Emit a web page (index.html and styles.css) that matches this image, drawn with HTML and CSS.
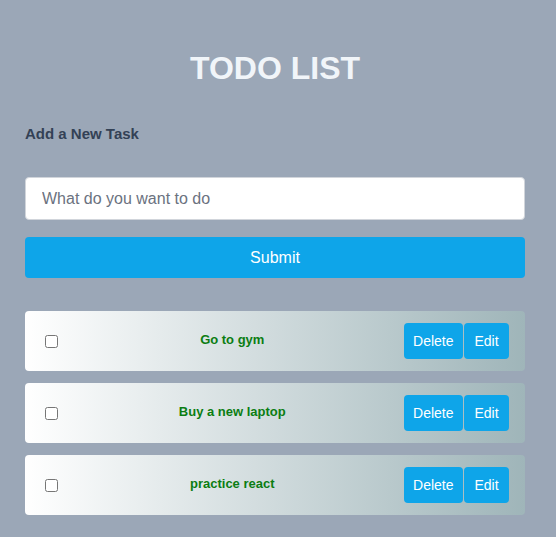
FILE: index.html
```html
<!DOCTYPE html>
<html lang="en">
<head>
<meta charset="utf-8">
<title>Todo List</title>
<link rel="stylesheet" href="styles.css">
</head>
<body>
<main class="app">
  <h1 class="title">TODO LIST</h1>
  <form class="add-form">
    <label class="add-label" for="task">Add a New Task</label>
    <input class="task-input" id="task" type="text" placeholder="What do you want to do">
    <button class="submit-btn" type="button">Submit</button>
  </form>
  <ul class="task-list">
    <li class="task">
      <input class="task-check" type="checkbox">
      <span class="task-text">Go to gym</span>
      <div class="task-actions">
        <button class="act-btn" type="button">Delete</button>
        <button class="act-btn act-edit" type="button">Edit</button>
      </div>
    </li>
    <li class="task">
      <input class="task-check" type="checkbox">
      <span class="task-text">Buy a new laptop</span>
      <div class="task-actions">
        <button class="act-btn" type="button">Delete</button>
        <button class="act-btn act-edit" type="button">Edit</button>
      </div>
    </li>
    <li class="task">
      <input class="task-check" type="checkbox">
      <span class="task-text">practice react</span>
      <div class="task-actions">
        <button class="act-btn" type="button">Delete</button>
        <button class="act-btn act-edit" type="button">Edit</button>
      </div>
    </li>
  </ul>
</main>
</body>
</html>
```
FILE: styles.css
```css
* { box-sizing: border-box; }
html, body { margin: 0; padding: 0; }
body {
  background: #9ba7b7;
  font-family: "Liberation Sans", Arial, sans-serif;
  min-height: 537px;
}
.app {
  width: 500px;
  margin-left: 25px;
  padding-top: 50px;
  display: flex;
  flex-direction: column;
}
.title {
  margin: 0;
  font-size: 32px;
  font-weight: 700;
  line-height: 36px;
  color: #f1f5f9;
  text-align: center;
}
.add-form {
  display: flex;
  flex-direction: column;
  margin-top: 39px;
}
.add-label {
  font-size: 15px;
  font-weight: 700;
  line-height: 17px;
  color: #334155;
}
.task-input {
  margin-top: 35px;
  height: 43px;
  border: 1px solid #d1d5db;
  border-radius: 4px;
  background: #fff;
  padding: 0 16px;
  font-family: inherit;
  font-size: 16px;
  color: #374151;
  outline: none;
}
.task-input::placeholder { color: #6b7280; }
.submit-btn {
  margin-top: 17px;
  height: 41px;
  border: none;
  border-radius: 4px;
  background: #0ea5e9;
  color: #fff;
  font-family: inherit;
  font-size: 16px;
}
.task-list {
  list-style: none;
  margin: 33px 0 0;
  padding: 0;
  display: flex;
  flex-direction: column;
  gap: 12px;
}
.task {
  height: 60px;
  display: flex;
  align-items: center;
  justify-content: space-between;
  padding: 0 16px;
  border-radius: 4px;
  background: linear-gradient(to right, #ffffff, #9fb5b9);
}
.task-check {
  margin: 3px 3px 3px 4px;
  width: 13px;
  height: 13px;
}
.task-text {
  font-size: 13px;
  font-weight: 700;
  color: #0b7d12;
  margin-bottom: 3px;
}
.task-actions {
  display: flex;
  gap: 1px;
}
.act-btn {
  height: 36px;
  border: none;
  border-radius: 4px;
  background: #0ea5e9;
  color: #fff;
  font-family: inherit;
  font-size: 14px;
  padding: 0 9.5px;
}
.act-edit { padding: 0 10px; min-width: 45px; }
```
